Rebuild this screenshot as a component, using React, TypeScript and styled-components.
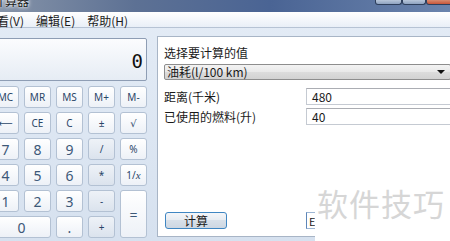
import styled, { createGlobalStyle } from "styled-components";

const GlobalStyle = createGlobalStyle`
  html, body {
    margin: 0;
    padding: 0;
    background: #ffffff;
  }
`;

const Window = styled.div`
  position: relative;
  width: 450px;
  height: 241px;
  overflow: hidden;
  display: flex;
  flex-direction: column;
  font-family: "Noto Sans CJK SC", "Noto Sans", sans-serif;
  background: linear-gradient(#e4ecf6, #d6e1ef);
`;

const TitleBar = styled.div`
  height: 12px;
  flex-shrink: 0;
  display: flex;
  justify-content: space-between;
  align-items: flex-start;
  overflow: hidden;
  background: linear-gradient(90deg, #8593a8 0%, #5d7194 30%, #4a6494 60%, #6b84ad 100%);
`;

const TitleText = styled.span`
  margin: -7px 0 0 -7px;
  font-size: 12px;
  line-height: 16px;
  color: #1a1a1a;
  text-shadow: 0 0 5px #ffffff, 0 0 3px #ffffff;
`;

const WindowControls = styled.div`
  display: flex;
  margin-right: -6px;
`;

const ControlButton = styled.span<{ $width: number; $close?: boolean }>`
  width: ${(p) => p.$width}px;
  height: 4px;
  border: 1px solid #2e3f5c;
  border-top: none;
  border-radius: 0 0 3px 3px;
  background: ${(p) =>
    p.$close ? "linear-gradient(#d98a6e, #c8563a)" : "linear-gradient(#b8c6da, #8ea2c0)"};
`;

const MenuBar = styled.div`
  box-sizing: border-box;
  height: 16px;
  flex-shrink: 0;
  display: flex;
  align-items: flex-start;
  gap: 12px;
  padding-top: 2px;
  margin-left: -3px;
  font-size: 12px;
  color: #1c1c1c;
  background: linear-gradient(#ffffff, #e9eff7);
  border-bottom: 1px solid #b6c3d4;
`;

const MenuItem = styled.span`
  line-height: 14px;
`;

const Body = styled.div`
  flex: 1;
  display: flex;
  align-items: flex-start;
`;

const CalcPanel = styled.div`
  margin: 10px 0 0 -8px;
  width: 155px;
  display: flex;
  flex-direction: column;
  gap: 5px;
  flex-shrink: 0;
`;

const Display = styled.div`
  height: 38px;
  border: 1px solid #8e9db4;
  border-radius: 2px;
  background: linear-gradient(#fbfcfe, #e6ecf4);
  display: flex;
  justify-content: flex-end;
  align-items: center;
  padding: 3px 3px 0 0;
  font-family: "DejaVu Sans Mono", "Liberation Mono", monospace;
  font-size: 19px;
  color: #111111;
`;

const Keypad = styled.div`
  display: grid;
  grid-template-columns: repeat(5, 27px);
  grid-auto-rows: 22px;
  column-gap: 5px;
  row-gap: 4px;
`;

const Key = styled.div<{ $op?: boolean; $big?: boolean; $wide?: boolean; $tall?: boolean }>`
  box-sizing: border-box;
  display: flex;
  align-items: center;
  justify-content: center;
  border: 1px solid #b3c1d3;
  border-radius: 3px;
  background: ${(p) =>
    p.$op ? "linear-gradient(#eef2f7, #dbe3ed)" : "linear-gradient(#ffffff, #edf1f7)"};
  color: ${(p) => (p.$big ? "#3d5878" : "#2a4668")};
  font-family: "Noto Sans", "DejaVu Sans", sans-serif;
  font-size: ${(p) => (p.$big ? "14px" : "10px")};
  grid-column: ${(p) => (p.$wide ? "span 2" : "auto")};
  grid-row: ${(p) => (p.$tall ? "span 2" : "auto")};
`;

const Italic = styled.i`
  font-family: "Liberation Serif", serif;
  font-size: 11px;
`;

const SidePanel = styled.div`
  box-sizing: border-box;
  margin: 8px 0 0 10px;
  width: 302px;
  height: 201px;
  flex-shrink: 0;
  display: flex;
  flex-direction: column;
  padding: 8px 7px 7px 6px;
  background: #ffffff;
  border: 1px solid #a8b5c6;
  font-size: 12px;
  color: #1a1a1a;
`;

const Prompt = styled.div`
  line-height: 16px;
`;

const Select = styled.div`
  box-sizing: border-box;
  margin-top: 3px;
  height: 16px;
  display: flex;
  align-items: center;
  justify-content: space-between;
  padding: 0 5px 0 2px;
  border: 1px solid #8d8d8d;
  border-radius: 2px;
  background: linear-gradient(#f3f3f3, #e8e8e8 50%, #dcdcdc 50%, #d2d2d2);
  line-height: 14px;
`;

const Arrow = styled.span`
  width: 0;
  height: 0;
  border-left: 4px solid transparent;
  border-right: 4px solid transparent;
  border-top: 4px solid #111111;
`;

const Fields = styled.div`
  margin-top: 8px;
  display: grid;
  grid-template-columns: 142px 1fr;
  grid-auto-rows: 17px;
  row-gap: 3px;
  align-items: center;
`;

const Label = styled.span`
  line-height: 17px;
`;

const Input = styled.div`
  box-sizing: border-box;
  height: 17px;
  display: flex;
  align-items: center;
  padding-left: 5px;
  border: 1px solid #c5cad2;
  border-top-color: #abadb3;
  background: #ffffff;
`;

const ActionRow = styled.div`
  margin-top: auto;
  display: grid;
  grid-template-columns: 142px 1fr;
  align-items: center;
`;

const CalcButton = styled.div`
  box-sizing: border-box;
  margin-left: 1px;
  width: 62px;
  height: 17px;
  display: flex;
  align-items: center;
  justify-content: center;
  border: 1px solid #3f86c2;
  border-radius: 3px;
  background: linear-gradient(#f4f6f9, #e6ebf1 50%, #d8e0e9 50%, #cdd7e2);
  line-height: 15px;
`;

const ResultBox = styled.div`
  box-sizing: border-box;
  height: 17px;
  width: 40px;
  display: flex;
  align-items: center;
  padding-left: 2px;
  border: 1px solid #9db6d4;
  border-left-color: #5d86b8;
  background: #ffffff;
  font-size: 11px;
`;

const Watermark = styled.div`
  position: absolute;
  left: 315px;
  top: 186px;
  width: 135px;
  height: 55px;
  display: flex;
  align-items: flex-start;
  padding-left: 2px;
  background: #ffffff;
  color: #d6d6d6;
  font-family: "Noto Sans CJK SC", sans-serif;
  font-size: 31px;
  line-height: 34px;
  letter-spacing: 1px;
`;

const keys: { label: React.ReactNode; op?: boolean; big?: boolean; wide?: boolean; tall?: boolean }[] = [
  { label: "MC" },
  { label: "MR" },
  { label: "MS" },
  { label: "M+" },
  { label: "M-" },
  { label: "⟵" },
  { label: "CE" },
  { label: "C" },
  { label: "±" },
  { label: "√" },
  { label: "7", big: true },
  { label: "8", big: true },
  { label: "9", big: true },
  { label: "/", op: true },
  { label: "%" },
  { label: "4", big: true },
  { label: "5", big: true },
  { label: "6", big: true },
  { label: "*", op: true },
  { label: <>1/<Italic>x</Italic></> },
  { label: "1", big: true },
  { label: "2", big: true },
  { label: "3", big: true },
  { label: "-", op: true },
  { label: "=", big: true, tall: true },
  { label: "0", big: true, wide: true },
  { label: ".", big: true },
  { label: "+", op: true },
];

export default function App() {
  return (
    <>
      <GlobalStyle />
      <Window>
        <TitleBar>
          <TitleText>计算器</TitleText>
          <WindowControls>
            <ControlButton $width={25} />
            <ControlButton $width={22} />
            <ControlButton $width={28} $close />
          </WindowControls>
        </TitleBar>
        <MenuBar>
          <MenuItem>看(V)</MenuItem>
          <MenuItem>编辑(E)</MenuItem>
          <MenuItem>帮助(H)</MenuItem>
        </MenuBar>
        <Body>
          <CalcPanel>
            <Display>0</Display>
            <Keypad>
              {keys.map((k, i) => (
                <Key key={i} $op={k.op} $big={k.big} $wide={k.wide} $tall={k.tall}>
                  {k.label}
                </Key>
              ))}
            </Keypad>
          </CalcPanel>
          <SidePanel>
            <Prompt>选择要计算的值</Prompt>
            <Select>
              <span>油耗(l/100 km)</span>
              <Arrow />
            </Select>
            <Fields>
              <Label>距离(千米)</Label>
              <Input>480</Input>
              <Label>已使用的燃料(升)</Label>
              <Input>40</Input>
            </Fields>
            <ActionRow>
              <CalcButton>计算</CalcButton>
              <ResultBox>E</ResultBox>
            </ActionRow>
          </SidePanel>
        </Body>
        <Watermark>软件技巧</Watermark>
      </Window>
    </>
  );
}
